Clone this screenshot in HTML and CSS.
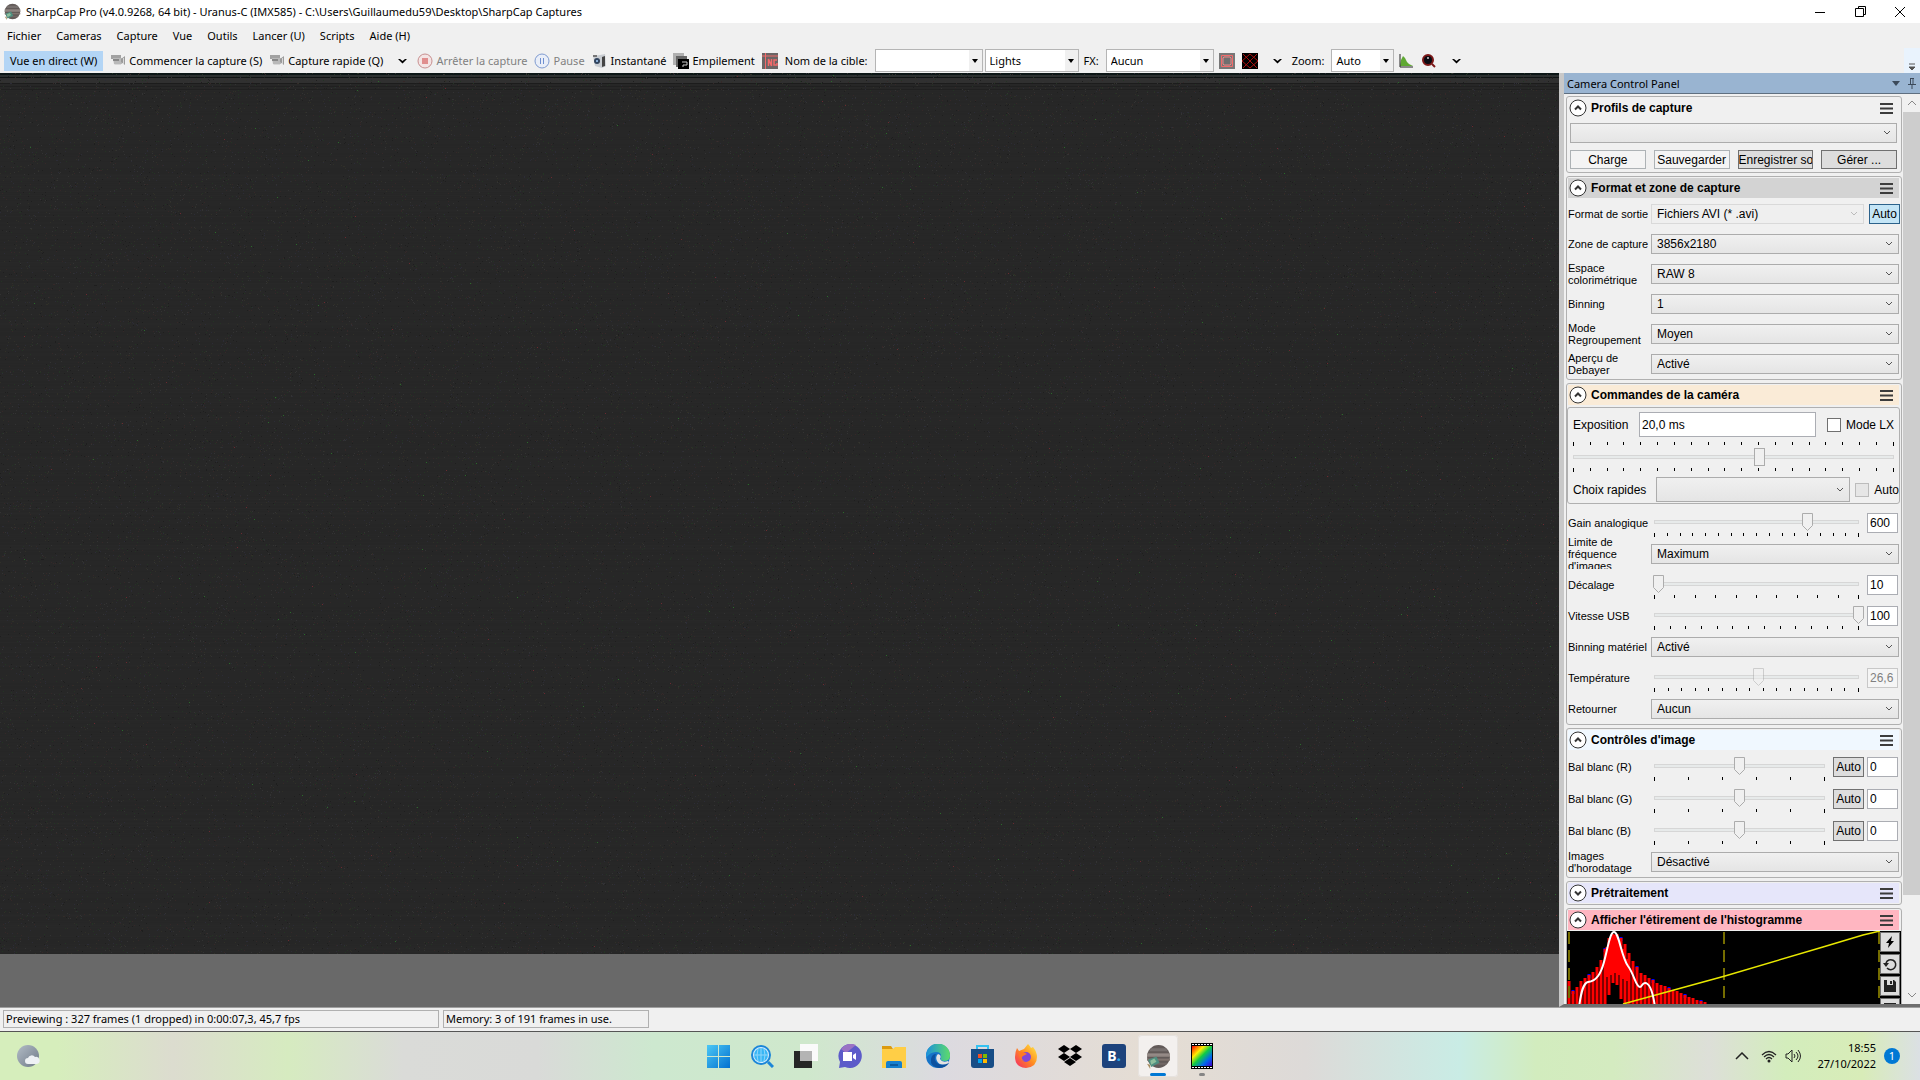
FILE: index.html
```html
<!DOCTYPE html>
<html lang="fr">
<head>
    <meta charset="UTF-8">
    <meta name="viewport" content="width=device-width, initial-scale=1.0">
    <title>SharpCap Pro</title>
    <link rel="stylesheet" href="styles.css">
</head>

<body>

<!-- shared symbols -->
<svg class="symbols" width="0" height="0" aria-hidden="true">
    <symbol id="planet" viewBox="0 0 24 24">
        <circle cx="12" cy="12" r="11" fill="#625a58"/>
        <path d="M5 4h14l2 3H3z" fill="#77706e"/>
        <path d="M1 9h22v2H1z" fill="#958b87"/>
        <path d="M1 11h22v1H1z" fill="#a89c96"/>
        <path d="M1 14h22v2H1z" fill="#80746f"/>
        <path d="M3 18h18l-2 2H5z" fill="#726865"/>
        <path d="M2 15l8-3 3 6-8 4z" fill="#4f8f80"/>
        <path d="M4 16l4-2 2 3-5 3z" fill="#8ebf9c"/>
        <path d="M1 19l3 1v4z" fill="#a78e62"/>
    </symbol>
    <symbol id="camcorder" viewBox="0 0 16 14">
        <path d="M1 1h10v4H1z" fill="#a2a2a2"/>
        <path d="M3 4h9v6H4z" fill="#b9b9b9"/>
        <path d="M3 5h6v2H3z" fill="#888"/>
        <path d="M11 5l4-3v9l-4-3z" fill="#9a9a9a"/>
        <path d="M13 4h1v6h-1zM4 10h7v1H5z" fill="#d8d8d8"/>
    </symbol>
    <symbol id="burger" viewBox="0 0 13 11">
        <path d="M0 1h13M0 5.500h13M0 10h13" stroke="#3c3c3c" stroke-width="2"/>
    </symbol>
    <symbol id="fold" viewBox="0 0 18 18">
        <circle cx="9" cy="9" r="8" fill="#fff" stroke="#333"/>
        <path d="M6 10.500L9 7.500l3 3" fill="none" stroke="#333" stroke-width="2"/>
    </symbol>
</svg>

<header class="title-bar">
    <svg class="app-icon" width="17" height="17"><use href="#planet"/></svg>
    <h1>SharpCap Pro (v4.0.9268, 64 bit) - Uranus-C (IMX585) - C:\Users\Guillaumedu59\Desktop\SharpCap Captures</h1>
    <div class="window-buttons">
        <button aria-label="Réduire"><svg width="12" height="12"><path d="M1 6.500h10" stroke="#000"/></svg></button>
        <button aria-label="Restaurer"><svg width="13" height="13"><path d="M1.500 3.500h8v8h-8zM4.500 3.500v-2h7v8h-2" fill="none" stroke="#000"/></svg></button>
        <button aria-label="Fermer"><svg width="12" height="12"><path d="M1 1l10 10M11 1L1 11" stroke="#000"/></svg></button>
    </div>
</header>

<nav class="menu-bar">
    <a href="#">Fichier</a>
    <a href="#">Cameras</a>
    <a href="#">Capture</a>
    <a href="#">Vue</a>
    <a href="#">Outils</a>
    <a href="#">Lancer (U)</a>
    <a href="#">Scripts</a>
    <a href="#">Aide (H)</a>
</nav>

<div class="toolbar">
    <button class="live">Vue en direct (W)</button>
    <button><svg width="16" height="14"><use href="#camcorder"/></svg>Commencer la capture (S)</button>
    <button><svg width="16" height="14"><use href="#camcorder"/></svg>Capture rapide (Q)</button>
    <button class="more" aria-label="Options"><svg width="9" height="6"><path d="M0 1h2l2.500 2L7 1h2L4.500 5.500z"/></svg></button>
    <button disabled><svg width="16" height="16"><circle cx="8" cy="8" r="7" fill="#f4e4e4" stroke="#c78f8f"/><path d="M5 5h6v6H5z" fill="#e08e8e"/></svg>Arrêter la capture</button>
    <button disabled><svg width="16" height="16"><circle cx="8" cy="8" r="7" fill="#e9eef8" stroke="#7f9bd0"/><path d="M6.500 5v6M9.500 5v6" stroke="#6f8fd0"/></svg>Pause</button>
    <button><svg width="16" height="16"><path d="M1 3l7-1 5-1 1 12-4 2-7-2z" fill="#c9cdd2"/><path d="M10 4l3-1v10l-3 1z" fill="#444"/><circle cx="5" cy="8" r="3" fill="#31445e"/><circle cx="5" cy="8" r="1" fill="#a9d0ff"/><path d="M1 2h4v2H1z" fill="#777"/></svg>Instantané</button>
    <button><svg width="16" height="16"><path d="M0 0h11v12H0z" fill="#b0b0b0"/><path d="M3 3h11v11H3z" fill="#666"/><path d="M5 6h11v10H5z" fill="#000"/><path d="M9 9h5v3h-4v2" fill="none" stroke="#ccc"/></svg>Empilement</button>
    <button aria-label="Nommage"><svg width="16" height="16"><path d="M0 0h16v16H0z" fill="#6b6565"/><path d="M0 3h16M3.500 0v16" stroke="#f26a6a"/><path d="M6.500 13V6l3 7V6M15 7h-3v5h3v-2" fill="none" stroke="#f26a6a" stroke-width="1.500"/></svg></button>
    <label for="target">Nom de la cible:</label>
    <select id="target" class="combo wide"><option></option></select>
    <select class="combo lights" aria-label="Type"><option>Lights</option></select>
    <label for="fx">FX:</label>
    <select id="fx" class="combo wide"><option>Aucun</option></select>
    <button aria-label="Zone"><svg width="16" height="16"><path d="M0 0h16v16H0z" fill="#777"/><path d="M2.500 2.500h11v11h-11z" fill="none" stroke="#f26a6a"/><path d="M5 4h6l1 1v6l-1 1H5l-1-1V5z" fill="#6f6f6f" stroke="#e88"/></svg></button>
    <button aria-label="Réticule"><svg width="16" height="16"><path d="M0 0h16v16H0z"/><path d="M1 1l14 14M15 1L1 15M0 8l8-7 8 7-8 7z" fill="none" stroke="#a11"/></svg></button>
    <button class="more" aria-label="Options"><svg width="9" height="6"><path d="M0 1h2l2.500 2L7 1h2L4.500 5.500z"/></svg></button>
    <label for="zoom">Zoom:</label>
    <select id="zoom" class="combo zoom"><option>Auto</option></select>
    <button aria-label="Histogramme"><svg width="15" height="16"><path d="M1 13l1-6 2-4 2 2 2 4 2 2 4 2z" fill="#5fa832"/><path d="M1 1v13h13" fill="none" stroke="#222"/></svg></button>
    <button aria-label="Mise au point"><svg width="16" height="16"><circle cx="7" cy="7" r="5" fill="#0a0a12" stroke="#7c1818" stroke-width="2"/><path d="M11 11l3 3" stroke="#7c1818" stroke-width="2"/><circle cx="7" cy="5" r="1" fill="#ccc"/></svg></button>
    <button class="more" aria-label="Options"><svg width="9" height="6"><path d="M0 1h2l2.500 2L7 1h2L4.500 5.500z"/></svg></button>
    <button class="overflow" aria-label="Plus"><svg width="8" height="8"><path d="M1 1h6M1 4h6L4 7z" stroke="#555" fill="#555"/></svg></button>
</div>

<main class="workspace">
    <section class="preview">
        <canvas id="frame"></canvas>
    </section>

    <aside class="panel">
        <div class="panel-title">
            <h2>Camera Control Panel</h2>
            <svg width="8" height="5"><path d="M0 0h8L4 5z" fill="#3c4a5a"/></svg>
            <svg width="8" height="12"><path d="M2.500 1v6M2 1.500h4M5 1v6M0 7.500h8M4 8v4" fill="none" stroke="#3c4a5a"/></svg>
        </div>
        <div class="panel-body">
            <div class="groups">

                <section class="group">
                    <div class="group-head">
                        <svg width="18" height="18"><use href="#fold"/></svg>
                        <h3>Profils de capture</h3>
                        <svg class="burger" width="13" height="11"><use href="#burger"/></svg>
                    </div>
                    <div class="profiles">
                        <select aria-label="Profil"><option></option></select>
                        <div class="profile-buttons">
                            <button class="light">Charge</button>
                            <button class="light">Sauvegarder</button>
                            <button>Enregistrer sous</button>
                            <button>Gérer ...</button>
                        </div>
                    </div>
                </section>

                <section class="group">
                    <div class="group-head grey">
                        <svg width="18" height="18"><use href="#fold"/></svg>
                        <h3>Format et zone de capture</h3>
                        <svg class="burger" width="13" height="11"><use href="#burger"/></svg>
                    </div>
                    <div class="row"><label for="format">Format de sortie</label><select id="format" class="faded"><option>Fichiers AVI (* .avi)</option></select><button class="auto on">Auto</button></div>
                    <div class="row"><label for="area">Zone de capture</label><select id="area"><option>3856x2180</option></select></div>
                    <div class="row"><label for="space">Espace colorimétrique</label><select id="space"><option>RAW 8</option></select></div>
                    <div class="row"><label for="bin">Binning</label><select id="bin"><option>1</option></select></div>
                    <div class="row"><label for="binmode">Mode Regroupement</label><select id="binmode"><option>Moyen</option></select></div>
                    <div class="row"><label for="debayer">Aperçu de Debayer</label><select id="debayer"><option>Activé</option></select></div>
                </section>

                <section class="group">
                    <div class="group-head peach">
                        <svg width="18" height="18"><use href="#fold"/></svg>
                        <h3>Commandes de la caméra</h3>
                        <svg class="burger" width="13" height="11"><use href="#burger"/></svg>
                    </div>
                    <div class="exposure">
                        <div class="exposure-row">
                            <label for="exp">Exposition</label>
                            <input id="exp" type="text" value="20,0 ms">
                            <input id="lx" type="checkbox"><label for="lx">Mode LX</label>
                        </div>
                        <div class="slider">
                            <div class="ticks" data-ticks="20"></div>
                            <input class="block" type="range" aria-label="Exposition" min="0" max="100" value="58">
                            <div class="ticks" data-ticks="20"></div>
                        </div>
                        <div class="exposure-row">
                            <label class="quick" for="quick">Choix rapides</label>
                            <select id="quick"><option></option></select>
                            <input id="expauto" type="checkbox" disabled><label for="expauto">Auto</label>
                        </div>
                    </div>
                    <div class="row tall"><label for="gain">Gain analogique</label><div class="slider"><input id="gain" type="range" value="75"><div class="ticks" data-ticks="17"></div></div><input type="text" aria-label="Gain" value="600"></div>
                    <div class="row tall"><label for="limit">Limite de fréquence d'images</label><select id="limit"><option>Maximum</option></select></div>
                    <div class="row tall"><label for="offset">Décalage</label><div class="slider"><input id="offset" type="range" value="2"><div class="ticks" data-ticks="11"></div></div><input type="text" aria-label="Décalage" value="10"></div>
                    <div class="row tall"><label for="usb">Vitesse USB</label><div class="slider"><input id="usb" type="range" value="100"><div class="ticks" data-ticks="14"></div></div><input type="text" aria-label="Vitesse" value="100"></div>
                    <div class="row tall"><label for="hwbin">Binning matériel</label><select id="hwbin"><option>Activé</option></select></div>
                    <div class="row tall"><label for="temp">Température</label><div class="slider"><input id="temp" type="range" value="51" disabled><div class="ticks" data-ticks="16"></div></div><input type="text" aria-label="Température" value="26,6" disabled></div>
                    <div class="row tall"><label for="flip">Retourner</label><select id="flip"><option>Aucun</option></select></div>
                </section>

                <section class="group">
                    <div class="group-head blue">
                        <svg width="18" height="18"><use href="#fold"/></svg>
                        <h3>Contrôles d'image</h3>
                        <svg class="burger" width="13" height="11"><use href="#burger"/></svg>
                    </div>
                    <div class="row balance"><label for="wr">Bal blanc (R)</label><div class="slider"><input id="wr" type="range" value="50"><div class="ticks" data-ticks="6"></div></div><button class="auto">Auto</button><input type="text" aria-label="Rouge" value="0"></div>
                    <div class="row balance"><label for="wg">Bal blanc (G)</label><div class="slider"><input id="wg" type="range" value="50"><div class="ticks" data-ticks="6"></div></div><button class="auto">Auto</button><input type="text" aria-label="Vert" value="0"></div>
                    <div class="row balance"><label for="wb">Bal blanc (B)</label><div class="slider"><input id="wb" type="range" value="50"><div class="ticks" data-ticks="6"></div></div><button class="auto">Auto</button><input type="text" aria-label="Bleu" value="0"></div>
                    <div class="row"><label for="stamp">Images d'horodatage</label><select id="stamp"><option>Désactivé</option></select></div>
                </section>

                <section class="group">
                    <div class="group-head lavender">
                        <svg class="closed" width="18" height="18"><use href="#fold"/></svg>
                        <h3>Prétraitement</h3>
                        <svg class="burger" width="13" height="11"><use href="#burger"/></svg>
                    </div>
                </section>

                <section class="group">
                    <div class="group-head pink">
                        <svg width="18" height="18"><use href="#fold"/></svg>
                        <h3>Afficher l'étirement de l'histogramme</h3>
                        <svg class="burger" width="13" height="11"><use href="#burger"/></svg>
                    </div>
                    <div class="histogram">
                        <svg width="313" height="100">
                            <path id="blue-bars" stroke="#0000ff" stroke-width="3"/>
                            <path id="red-bars" stroke="#ff0000" stroke-width="3"/>
                            <path d="M2 1v99M157 1v99M312 1v99" stroke="#756d00" stroke-width="2" stroke-dasharray="12 6"/>
                            <path d="M56 73L96 62L158 45L256 16L296 4L313 0" fill="none" stroke="#e8e800" stroke-width="1.500"/>
                            <path d="M12 76C14 62 16 52 21 51C30 50 34 42 37 31C41 16 43 1 47 1C52 1 54 25 61 35C67 43 69 56 73 56C75 56 75 52 78 52C83 52 86 62 88 76" fill="none" stroke="#fff" stroke-width="2"/>
                        </svg>
                        <div class="histogram-tools">
                            <button aria-label="Auto"><svg width="14" height="14"><path d="M9 1L3 8h3l-1 5 6-7H8z"/></svg></button>
                            <button aria-label="Réinitialiser"><svg width="14" height="14"><path d="M3 6a5 5 0 1 1 1 5" fill="none" stroke="#222" stroke-width="1.500"/><path d="M0 6h6L3 10z" fill="#222"/></svg></button>
                            <button aria-label="Enregistrer"><svg width="14" height="14"><path d="M1 1h10l2 2v10H1z" fill="#222"/><path d="M4 1h6v5H4z" fill="#ddd"/><path d="M8 2v3" stroke="#222" stroke-width="2"/></svg></button>
                            <button aria-label="Aperçu"><svg width="14" height="14"><path d="M1 2h12v10H1z" fill="#222"/><circle cx="7" cy="6" r="3" fill="#ddd"/></svg></button>
                        </div>
                    </div>
                </section>

            </div>
            <div class="scrollbar">
                <svg width="10" height="18"><path d="M1 11l4-4 4 4" fill="none" stroke="#888"/></svg>
                <div class="scroll-thumb"></div>
                <svg width="10" height="18"><path d="M1 7l4 4 4-4" fill="none" stroke="#888"/></svg>
            </div>
        </div>
    </aside>
</main>

<footer class="status-bar">
    <div class="status-cell frames">Previewing : 327 frames (1 dropped) in 0:00:07,3, 45,7 fps</div>
    <div class="status-cell memory">Memory: 3 of 191 frames in use.</div>
</footer>

<div class="taskbar">
    <button class="weather" aria-label="Météo"><svg width="24" height="24"><defs><linearGradient id="moon" x2="1" y2="1"><stop stop-color="#b2bcc6"/><stop offset="1" stop-color="#6f7a88"/></linearGradient></defs><circle cx="12" cy="12" r="11" fill="url(#moon)"/><path d="M12 20a3 3 0 0 1 0-6 4 4 0 0 1 7-1 3.500 3.500 0 0 1 2 7z" fill="#eef1f5"/></svg></button>
    <div class="apps">
        <button aria-label="Démarrer"><svg width="24" height="24"><defs><linearGradient id="win" x2="1" y2="1"><stop stop-color="#4cc8f5"/><stop offset="1" stop-color="#0270d0"/></linearGradient></defs><path d="M1 1h11v11H1zM13 1h11v11H13zM1 13h11v11H1zM13 13h11v11H13z" fill="url(#win)"/></svg></button>
        <button aria-label="Rechercher"><svg width="24" height="24"><circle cx="11" cy="11" r="9" fill="#d7efff" stroke="#1c86d8" stroke-width="2"/><circle cx="11" cy="11" r="7" fill="#38b6f5"/><path d="M4 11h14M11 4v14M8 5q-2 6 0 12M14 5q2 6 0 12" stroke="#8fd6fb" fill="none"/><path d="M18 18l5 5" stroke="#1c86d8" stroke-width="3"/></svg></button>
        <button aria-label="Vue des tâches"><svg width="24" height="24"><path d="M0 7h18v17H0z" fill="#262626"/><path d="M6 0h18v17H6z" fill="#fafafa"/><path d="M6 7h12v10H6z" fill="#b4b4b4"/></svg></button>
        <button aria-label="Conversation"><svg width="24" height="24"><path d="M12 0a12 12 0 1 1-5 23l-6 1 1-6A12 12 0 0 1 12 0z" fill="#5c5bc9"/><path d="M3 5a12 12 0 0 1 15-4L8 9z" fill="#9a73c4"/><path d="M5 8h9v9H5zM15 11l3-2v7l-3-2z" fill="#fff"/></svg></button>
        <button aria-label="Explorateur"><svg width="24" height="24"><path d="M0 2h9l2 3H0z" fill="#dc9b10"/><path d="M0 5h11l2-2h11v21H0z" fill="#ffce46"/><path d="M4 24v-5q0-2 2-2h12q2 0 2 2v5z" fill="#1580cf"/><path d="M8 20h8v2H8z" fill="#0a5ba0"/></svg></button>
        <button aria-label="Edge"><svg width="24" height="24"><defs><linearGradient id="edge"><stop stop-color="#1c8fdd"/><stop offset="1" stop-color="#5ddc6a"/></linearGradient></defs><circle cx="12" cy="12" r="12" fill="#1674c8"/><path d="M0 11A12 12 0 0 1 24 12q0 5-6 5-4 0-3-3 1-6-5-6T0 14z" fill="url(#edge)"/><path d="M10 10q-3 5 1 9 5 4 11-1l1 1q-3 5-10 5Q4 23 5 15q1-5 5-5z" fill="#0c519f"/><path d="M12 10q4 1 2 5 2 4 8 2l1 2q-9 4-12-2-2-4 1-7z" fill="#e4e2e2"/></svg></button>
        <button aria-label="Store"><svg width="24" height="24"><path d="M7 6V2h11v4" fill="none" stroke="#36c2f2" stroke-width="2"/><path d="M1 5h23v16q0 3-3 3H4q-3 0-3-3z" fill="#174d86"/><path d="M8 10h4v4H8z" fill="#f25022"/><path d="M13 10h4v4h-4z" fill="#7fba00"/><path d="M8 15h4v4H8z" fill="#00a4ef"/><path d="M13 15h4v4h-4z" fill="#ffb900"/></svg></button>
        <button aria-label="Firefox"><svg width="24" height="24"><defs><linearGradient id="fox" x1="1" x2="0" y2="1"><stop stop-color="#fff04a"/><stop offset=".5" stop-color="#ff8a20"/><stop offset="1" stop-color="#f4246d"/></linearGradient></defs><path d="M3 4l2 3 5-2 4-5q2 2 3 4l2-1q4 5 4 10 0 10-11 11Q1 23 1 13q0-5 2-9z" fill="url(#fox)"/><circle cx="12" cy="13" r="5" fill="#8248d8"/><path d="M5 9q5-2 8 1l-4 2q-3 2 1 5-5-1-5-8z" fill="#ff7a26"/></svg></button>
        <button aria-label="Dropbox"><svg width="24" height="24"><path d="M6 1l6 4-6 4-6-4zM18 1l6 4-6 4-6-4zM6 9l6 4-6 4-6-4zM18 9l6 4-6 4-6-4zM12 14l6 4-6 4-6-4z"/></svg></button>
        <button class="booking" aria-label="Booking"><span>B<b>.</b></span></button>
        <button class="active" aria-label="SharpCap"><svg width="25" height="25"><use href="#planet"/></svg></button>
        <button class="running" aria-label="Film"><svg width="24" height="26"><defs><linearGradient id="rainbow" x2="1" y2="1"><stop stop-color="#f00"/><stop offset=".3" stop-color="#fe0"/><stop offset=".5" stop-color="#1c4"/><stop offset=".75" stop-color="#06e"/><stop offset="1" stop-color="#40c"/></linearGradient></defs><path d="M1 0h22v26H1z"/><path d="M2 3h20v20H2z" fill="url(#rainbow)"/><path d="M2 1.500h20M2 24.500h20" stroke="#fff" stroke-dasharray="2 1"/></svg></button>
    </div>
    <div class="tray">
        <svg width="14" height="8"><path d="M1 7l6-6 6 6" fill="none" stroke="#222" stroke-width="1.500"/></svg>
        <svg width="16" height="13"><path d="M1 5q7-7 14 0M3 7q5-5 10 0M5 9q3-3 6 0" fill="none" stroke="#222" stroke-width="1.200"/><circle cx="8" cy="11" r="1.500" fill="#222"/></svg>
        <svg width="17" height="14"><path d="M1 5h2l4-4v12L3 9H1zM9 5q2 2 0 4M11 3q4 4 0 8M13 1q5 6 0 12" fill="none" stroke="#222"/></svg>
        <div class="clock"><span>18:55</span><span>27/10/2022</span></div>
        <span class="badge">1</span>
    </div>
</div>

<script src="script.js"></script>
</body>
</html>
```
FILE: styles.css
```css
/* General Styles */
* {
    box-sizing: border-box;
}

body {
    margin: 0;
    height: 100vh;
    display: flex;
    flex-direction: column;
    overflow: hidden;
    background-color: #f0f0f0;
    color: #000;
    font-family: "Noto Sans", "Open Sans", sans-serif;
    font-size: 11px;
}

h1, h2, h3 {
    margin: 0;
    font-size: 11px;
    font-weight: normal;
}

button, input, select {
    margin: 0;
    padding: 0;
    font: inherit;
    color: inherit;
    border-radius: 0;
}

svg {
    display: block;
    flex: none;
}

.symbols {
    position: absolute;
}

/* Title and menus */
.title-bar {
    height: 23px;
    flex: none;
    display: flex;
    align-items: center;
    gap: 5px;
    padding-left: 4px;
    background-color: #fff;
}

.title-bar h1 {
    flex: 1;
}

.window-buttons {
    display: flex;
}

.window-buttons button {
    width: 40px;
    height: 23px;
    display: flex;
    align-items: center;
    justify-content: center;
    border: none;
    background: none;
}

.menu-bar {
    height: 25px;
    flex: none;
    display: flex;
    align-items: center;
    gap: 15px;
    padding-left: 7px;
}

.menu-bar a {
    color: #000;
    text-decoration: none;
}

.toolbar {
    height: 25px;
    flex: none;
    display: flex;
    align-items: center;
    gap: 7px;
    padding-left: 4px;
}

.toolbar button {
    display: flex;
    align-items: center;
    gap: 3px;
    height: 20px;
    border: none;
    background: none;
    white-space: nowrap;
}

.toolbar button:disabled {
    color: #808080;
}

.toolbar .live {
    padding: 0 6px;
    background-color: #b3d5f5;
}

.toolbar .more {
    padding: 0 3px 0 8px;
}

.toolbar .overflow {
    width: 16px;
    height: 25px;
    margin-left: auto;
    align-items: flex-end;
    justify-content: center;
    padding-bottom: 2px;
    background-color: #e9f3fd;
}

.combo {
    appearance: none;
    height: 23px;
    padding: 0 4px;
    border: 1px solid #b5b5b5;
    background: url("data:image/svg+xml,%3Csvg xmlns='http://www.w3.org/2000/svg' width='13' height='21'%3E%3Cpath d='M0 0h13v21H0z' fill='%23f0f0f0'/%3E%3Cpath d='M3 9h6l-3 4z'/%3E%3C/svg%3E") no-repeat right center #fff;
}

.combo.wide {
    width: 108px;
}

.combo.lights {
    width: 94px;
    margin-left: -5px;
}

.combo.zoom {
    width: 63px;
}

.combo + button,
.combo + label {
    margin-left: -2px;
}

/* Workspace */
.workspace {
    flex: 1;
    min-height: 0;
    display: flex;
}

.preview {
    flex: 1;
    min-width: 0;
    padding-bottom: 53px;
    background-color: #696969;
}

.preview canvas {
    display: block;
    width: 100%;
    height: 100%;
    background-color: #282828;
}

.panel {
    width: 361px;
    flex: none;
    display: flex;
    flex-direction: column;
    border-left: 5px solid #c8c8c8;
    border-bottom: 3px solid #6e6e6e;
    font-family: "Liberation Sans", Arial, sans-serif;
    font-size: 12px;
}

.panel-title {
    height: 21px;
    flex: none;
    display: flex;
    align-items: center;
    gap: 8px;
    padding: 0 4px 0 3px;
    background-color: #99b4d1;
    border-bottom: 1px solid #5f6f80;
    font-family: "Noto Sans", "Open Sans", sans-serif;
}

.panel-title h2 {
    flex: 1;
}

.panel-body {
    flex: 1;
    min-height: 0;
    display: flex;
    gap: 1px;
}

.groups {
    flex: 1;
    min-width: 0;
    overflow: hidden;
    padding-top: 2px;
    padding-left: 2px;
}

.scrollbar {
    width: 17px;
    display: flex;
    flex-direction: column;
    align-items: center;
    background-color: #f0f0f0;
}

.scroll-thumb {
    width: 100%;
    height: 86%;
    background-color: #cdcdcd;
}

.scrollbar svg:last-child {
    margin-top: auto;
}

/* Groups */
.group {
    margin-bottom: 3px;
    padding: 1px 0 0;
    border: 1px solid #b0b0b0;
    border-radius: 3px;
}

.group-head {
    height: 20px;
    display: flex;
    align-items: center;
    gap: 4px;
    margin: 0 2px 1px 1px;
    padding: 0 6px 0 1px;
}

.group-head h3 {
    flex: 1;
    font-size: 12px;
    font-weight: bold;
}

.grey { background-color: #d3d3d3; }
.peach { background-color: #faebd7; }
.blue { background-color: #f0f8ff; }
.lavender { background-color: #e6e6fa; }
.pink { background-color: #ffb6c1; }

.closed {
    transform: rotate(180deg);
}

.panel select {
    appearance: none;
    flex: 1;
    min-width: 0;
    height: 20px;
    padding: 0 5px;
    border: 1px solid #acacac;
    background: url("data:image/svg+xml,%3Csvg xmlns='http://www.w3.org/2000/svg' width='15' height='6'%3E%3Cpath d='M3 1l3 3 3-3' fill='none' stroke='%23555'/%3E%3C/svg%3E") no-repeat right center, linear-gradient(#f0f0f0, #e5e5e5);
}

.panel .faded {
    margin-right: 5px;
    border-color: #d9d9d9;
    background-color: #efefef;
    background-image: url("data:image/svg+xml,%3Csvg xmlns='http://www.w3.org/2000/svg' width='15' height='6'%3E%3Cpath d='M3 1l3 3 3-3' fill='none' stroke='%23bbb'/%3E%3C/svg%3E");
}

.panel button {
    border: 1px solid #707070;
    background-color: #dddddd;
    white-space: nowrap;
    overflow: hidden;
}

.profiles {
    padding: 4px 4px 3px 3px;
}

.profiles select {
    width: 100%;
}

.profile-buttons {
    display: grid;
    grid-template-columns: repeat(4, 1fr);
    gap: 8px;
    margin-top: 7px;
}

.profile-buttons button {
    min-width: 0;
    height: 19px;
}

.profile-buttons .light {
    border-color: #adb2b5;
    background-color: #f4f4f4;
}

.row {
    height: 30px;
    display: flex;
    align-items: center;
    padding-right: 2px;
    padding-left: 1px;
    overflow: hidden;
}

.row.tall {
    height: 31px;
}

.row.balance {
    height: 32px;
}

.row label {
    width: 83px;
    flex: none;
    font-size: 11px;
    line-height: 12px;
}

.row .auto {
    width: 31px;
    height: 20px;
    flex: none;
    margin-right: 3px;
}

.row .auto.on {
    margin-right: -1px;
    border-color: #2c628b;
    background-color: #c4e5f6;
}

.panel input[type="text"] {
    width: 31px;
    height: 20px;
    flex: none;
    padding: 0 2px;
    border: 1px solid #abadb3;
    background-color: #fff;
}

.row input[type="text"] {
    margin-right: 1px;
}

.panel input[type="text"]:disabled {
    color: #808080;
    background-color: #f5f5f5;
    border-color: #c8c8c8;
}

/* Sliders */
.slider {
    flex: 1;
    min-width: 0;
    margin: 4px 8px 0 3px;
}

.slider input {
    appearance: none;
    display: block;
    width: calc(100% + 10px);
    height: 18px;
    margin: 0 -5px;
    background:
        linear-gradient(#e7eaea, #e7eaea) no-repeat center / calc(100% - 12px) 2px,
        linear-gradient(#d6d6d6, #d6d6d6) no-repeat center / calc(100% - 10px) 4px;
}

.slider input::-webkit-slider-thumb {
    appearance: none;
    width: 11px;
    height: 18px;
    background: url("data:image/svg+xml,%3Csvg xmlns='http://www.w3.org/2000/svg' width='11' height='18'%3E%3Cpath d='M.5.5h10v12l-5 5-5-5z' fill='%23f0f0f0' stroke='%23acacac'/%3E%3C/svg%3E");
}

.slider input:disabled::-webkit-slider-thumb {
    opacity: 0.5;
}

.slider .block::-webkit-slider-thumb {
    border: 1px solid #acacac;
    background: #f0f0f0;
}

.ticks {
    display: flex;
    justify-content: space-between;
    margin-top: 2px;
}

.ticks i {
    width: 1px;
    height: 3px;
    background-color: #000;
}

.ticks i:first-child,
.ticks i:last-child {
    height: 4px;
}

.exposure {
    display: flex;
    flex-direction: column;
    height: 97px;
    margin: 2px 1px 3px 0;
    padding: 4px 0 1px 5px;
    border: 1px solid #b0b0b0;
    border-radius: 3px;
    overflow: hidden;
}

.exposure-row {
    display: flex;
    align-items: center;
    gap: 5px;
    height: 25px;
    flex: none;
    white-space: nowrap;
}

.exposure-row label:first-child {
    width: 61px;
    flex: none;
}

.exposure-row .quick:first-child {
    width: 78px;
}

.exposure .exposure-row input[type="text"] {
    flex: 1;
    height: 25px;
    margin-right: 6px;
}

.exposure-row input[type="checkbox"] {
    appearance: none;
    width: 14px;
    height: 14px;
    flex: none;
    border: 1px solid #707070;
    background-color: #fff;
}

.exposure-row input[type="checkbox"]:disabled {
    border-color: #bcbcbc;
    background-color: #e6e6e6;
}

.exposure-row label:last-child {
    margin-right: 5px;
}

.exposure-row .quick ~ label {
    margin-right: 0;
}

.exposure .exposure-row select {
    height: 25px;
}

.exposure .slider {
    flex: 1;
    margin: 3px 5px 0 0;
}

.exposure .slider input {
    margin-top: 2px;
}

/* Histogram */
.histogram {
    display: flex;
    background-color: #000;
}

.histogram-tools {
    display: flex;
    flex-direction: column;
    gap: 2px;
    padding-top: 1px;
}

.histogram-tools button {
    width: 20px;
    height: 20px;
    display: flex;
    align-items: center;
    justify-content: center;
}

/* Status bar */
.status-bar {
    height: 25px;
    flex: none;
    display: flex;
    gap: 4px;
    padding: 2px 3px;
    border-top: 1px solid #a0a0a0;
    border-bottom: 1px solid #555;
}

.status-cell {
    height: 18px;
    padding-left: 2px;
    border: 1px solid #b0b0b0;
    line-height: 16px;
}

.frames {
    width: 436px;
}

.memory {
    width: 206px;
}

/* Taskbar */
.taskbar {
    height: 48px;
    flex: none;
    display: grid;
    grid-template-columns: 1fr auto 1fr;
    align-items: center;
    background: linear-gradient(90deg, #d6eebc 0%, #d6eebc 3%, #dcdccf 9%, #d6ebc0 15%, #dadbd8 21%, #d9dad8 28%, #cde8cf 34%, #cfe8cc 42%, #dcdae0 49%, #e5ddd3 60%, #dddad8 68%, #c9ece5 76%, #d2ecbe 80%, #d4ebc0 84%, #dddfd8 89%, #d3edbc 93%, #d8ecb8 97%, #dbe0e4 100%);
}

.taskbar button {
    display: flex;
    align-items: center;
    justify-content: center;
    border: none;
    background: none;
}

.taskbar .weather {
    width: 24px;
    margin-left: 16px;
}

.apps {
    display: flex;
    gap: 4px;
}

.apps button {
    width: 40px;
    height: 42px;
    border-radius: 4px;
}

.apps .active {
    background-color: #f3f0ee;
    box-shadow: inset 0 0 0 1px #e6e2de;
}

.active,
.running {
    position: relative;
}

.active::after,
.running::after {
    content: "";
    position: absolute;
    bottom: 1px;
    width: 16px;
    height: 3px;
    border-radius: 2px;
    background-color: #0078d4;
}

.running::after {
    width: 6px;
    background-color: #858585;
}

.booking span {
    width: 24px;
    height: 24px;
    border-radius: 3px;
    background-color: #1d437c;
    color: #fff;
    font-size: 14px;
    font-weight: bold;
    line-height: 24px;
}

.booking b {
    color: #2fa8e8;
}

.tray {
    display: flex;
    align-items: center;
    justify-content: flex-end;
    gap: 8px;
    padding-right: 20px;
}

.tray svg:first-child {
    margin-right: 4px;
}

.clock {
    display: flex;
    flex-direction: column;
    width: 66px;
    text-align: right;
    line-height: 16px;
}

.badge {
    width: 16px;
    height: 16px;
    border-radius: 50%;
    background-color: #0078d4;
    color: #fff;
    text-align: center;
    line-height: 16px;
}
```
FILE: script.js
```js
// slider graduations
document.querySelectorAll(".ticks").forEach(ticks => {
    const count = parseInt(ticks.getAttribute("data-ticks"));
    for (let i = 0; i < count; i++) {
        ticks.appendChild(document.createElement("i"));
    }
});

// histogram columns: top of each bar, 4px apart
const tops = [50, 60, 56, 50, 47, 44, 41, 36, 29, 18, 7, 3, 3, 7, 13, 22, 30, 36, 42, 44, 47, 49, 52, 54, 55, 57, 59, 60, 62, 64, 66, 67, 69, 70, 71];
const bottoms = { 10: 64, 11: 52, 12: 54, 13: 68 };
let red = "";
let blue = "";
tops.forEach((top, i) => {
    const x = 2 + i * 4;
    red += `M${x} ${top}V${bottoms[i] || 100}`;
    if (i % 4 === 1) {
        blue += `M${x} ${top - 1}v4`;
    }
});
// the peak is nearly solid in its upper part
red += "M40 16V46M44 6V44M48 4V42M52 10V44M56 18V48M60 28V50";
document.getElementById("red-bars").setAttribute("d", red);
document.getElementById("blue-bars").setAttribute("d", blue);

// dark sensor frame with read-out lines and hot pixels
const canvas = document.getElementById("frame");
const ctx = canvas.getContext("2d");
canvas.width = canvas.clientWidth;
canvas.height = canvas.clientHeight;

let seed = 7;
function random() {
    seed = (seed * 16807) % 2147483647;
    return seed / 2147483647;
}

ctx.fillStyle = "#282828";
ctx.fillRect(0, 0, canvas.width, canvas.height);
for (let y = 0; y < canvas.height; y++) {
    ctx.fillStyle = `rgba(0, 0, 0, ${random() * 0.04})`;
    ctx.fillRect(0, y, canvas.width, 1);
}
// brighter read-out bands near the top edge
[[0, 2, "#0c1616"], [2, 2, "#2c3030"], [4, 1, "#101414"], [5, 5, "#303030"], [10, 1, "#1c1c1c"], [13, 1, "#202020"], [16, 1, "#202020"]].forEach(([y, height, color]) => {
    ctx.fillStyle = color;
    ctx.fillRect(0, y, canvas.width, height);
});

const dots = ["#333333", "#1e1e1e", "#303028", "#2c2c36", "#352828", "#243424"];
for (let i = 0; i < 60000; i++) {
    ctx.fillStyle = dots[i % dots.length];
    ctx.fillRect(Math.floor(random() * canvas.width), Math.floor(random() * canvas.height), 1, 1);
}
for (let i = 0; i < 250; i++) {
    ctx.fillStyle = i % 2 ? "#2a6a2a" : "#6a2a30";
    ctx.fillRect(Math.floor(random() * canvas.width), Math.floor(random() * canvas.height), 1, 1);
}
```
